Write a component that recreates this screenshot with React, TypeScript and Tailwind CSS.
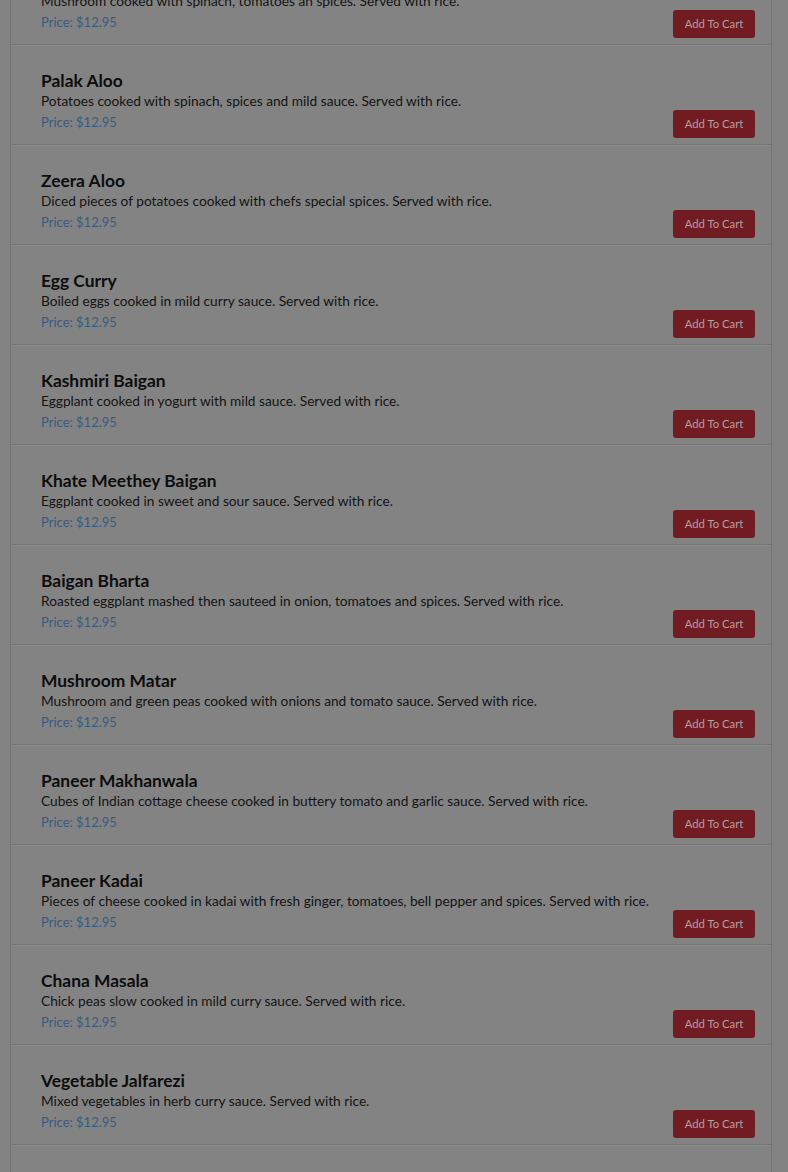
import React from 'react';

type Dish = {
  id: number;
  name: string;
  description: string;
  price: string;
};

const DISHES: Dish[] = [
  { id: 1, name: 'Saag Mushroom', description: 'Mushroom cooked with spinach, tomatoes an spices. Served with rice.', price: '12.95' },
  { id: 2, name: 'Palak Aloo', description: 'Potatoes cooked with spinach, spices and mild sauce. Served with rice.', price: '12.95' },
  { id: 3, name: 'Zeera Aloo', description: 'Diced pieces of potatoes cooked with chefs special spices. Served with rice.', price: '12.95' },
  { id: 4, name: 'Egg Curry', description: 'Boiled eggs cooked in mild curry sauce. Served with rice.', price: '12.95' },
  { id: 5, name: 'Kashmiri Baigan', description: 'Eggplant cooked in yogurt with mild sauce. Served with rice.', price: '12.95' },
  { id: 6, name: 'Khate Meethey Baigan', description: 'Eggplant cooked in sweet and sour sauce. Served with rice.', price: '12.95' },
  { id: 7, name: 'Baigan Bharta', description: 'Roasted eggplant mashed then sauteed in onion, tomatoes and spices. Served with rice.', price: '12.95' },
  { id: 8, name: 'Mushroom Matar', description: 'Mushroom and green peas cooked with onions and tomato sauce. Served with rice.', price: '12.95' },
  { id: 9, name: 'Paneer Makhanwala', description: 'Cubes of Indian cottage cheese cooked in buttery tomato and garlic sauce. Served with rice.', price: '12.95' },
  { id: 10, name: 'Paneer Kadai', description: 'Pieces of cheese cooked in kadai with fresh ginger, tomatoes, bell pepper and spices. Served with rice.', price: '12.95' },
  { id: 11, name: 'Chana Masala', description: 'Chick peas slow cooked in mild curry sauce. Served with rice.', price: '12.95' },
  { id: 12, name: 'Vegetable Jalfarezi', description: 'Mixed vegetables in herb curry sauce. Served with rice.', price: '12.95' },
];

const DishRow: React.FC<{ dish: Dish }> = ({ dish }) => (
  <div className="flex justify-between h-[100px] pt-[26px] pl-[30px] pr-4 pb-[6px] border-b border-[#767676] shadow-[0_1px_0_#8a8a8a]">
    <div className="flex flex-col">
      <h3 className="text-[17.4px] leading-[20px] font-bold text-[#0d0d0d]">{dish.name}</h3>
      <p className="text-[13.7px] leading-[20px] text-[#141414]">{dish.description}</p>
      <span className="text-[13px] leading-[22px] text-[#3b5b7e]">Price: ${dish.price}</span>
    </div>
    <button className="self-end w-[82px] h-[28px] rounded-[3px] bg-[#711c22] text-[11.3px] text-[#b89c9f]">
      Add To Cart
    </button>
  </div>
);

const App: React.FC = () => {
  return (
    <div
      className="h-[1172px] overflow-hidden bg-[#828282]"
      style={{ fontFamily: '"Source Sans Pro", Lato, "Liberation Sans", sans-serif' }}
    >
      {/* list is scrolled: first row is partly above the top edge */}
      <div className="ml-[10px] mr-[16px] -mt-[55px] border-x border-[#747474] bg-[#838383]">
        {DISHES.map(dish => (
          <DishRow key={dish.id} dish={dish} />
        ))}
        <div className="h-[40px]" />
      </div>
    </div>
  );
};

export default App;
